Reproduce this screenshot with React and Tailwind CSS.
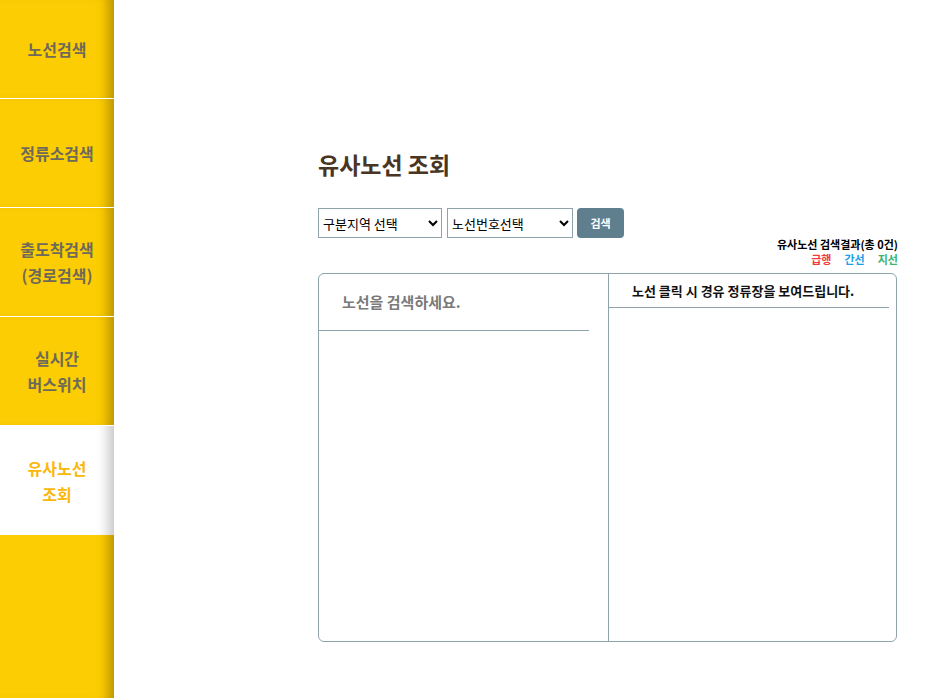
import React from "react";

const menus = [
  { label: ["노선검색"], h: "h-[99px]" },
  { label: ["정류소검색"], h: "h-[109px]" },
  { label: ["출도착검색", "(경로검색)"], h: "h-[109px]" },
  { label: ["실시간", "버스위치"], h: "h-[109px]" },
  { label: ["유사노선", "조회"], h: "h-[109px]", active: true },
];

export default function App() {
  return (
    <div
      className="flex min-h-[698px] w-full bg-white"
      style={{ fontFamily: '"Noto Sans CJK KR", "Noto Sans", sans-serif' }}
    >
      {/* 왼쪽 메뉴 */}
      <div className="flex w-[114px] shrink-0 flex-col bg-[#fdcd03] shadow-[inset_-14px_0_12px_-8px_rgba(0,0,0,0.28)]">
        {menus.map((m, i) => (
          <div
            key={i}
            className={
              "flex flex-col items-center justify-center text-[16px] font-bold leading-[26px] " +
              m.h +
              (m.active
                ? " bg-white text-[#fbb70c] shadow-[inset_-14px_0_12px_-8px_rgba(0,0,0,0.22)]"
                : " border-b border-white bg-[#fdcd03] text-[#6e6a5a] shadow-[inset_-14px_0_12px_-8px_rgba(0,0,0,0.28)]")
            }
          >
            {m.label.map((l) => (
              <span key={l}>{l}</span>
            ))}
          </div>
        ))}
        <div className="flex-1" />
      </div>

      {/* 본문 */}
      <div className="flex-1 pl-[204px] pr-[45px] pt-[148px]">
        <h1 className="text-[23px] font-bold leading-[32px] text-[#4a3422]">유사노선 조회</h1>

        <div className="mt-[28px] flex items-center gap-[5px]">
          <select className="h-[30px] w-[124px] border border-[#8fa3ad] bg-white px-0 text-[13px] text-black">
            <option>구분지역 선택</option>
          </select>
          <select className="h-[30px] w-[126px] border border-[#8fa3ad] bg-white px-0 text-[13px] text-black">
            <option>노선번호선택</option>
          </select>
          <button className="ml-[-1px] h-[30px] w-[47px] rounded-[4px] bg-[#5f7f8e] text-[11px] font-bold text-white">
            검색
          </button>
        </div>

        <div className="mt-[-1px] text-right text-[11px] font-bold leading-[15px]">
          <div className="text-black">유사노선 검색결과(총 0건)</div>
          <div className="flex justify-end gap-[13px]">
            <span className="text-[#f03c3c]">급행</span>
            <span className="text-[#1ea0e6]">간선</span>
            <span className="text-[#3cb371]">지선</span>
          </div>
        </div>

        <div className="mt-[6px] flex h-[369px] w-[579px] rounded-[6px] border border-[#8fa3ad]">
          <div className="w-[290px] border-r border-[#8fa3ad] pr-[19px]">
            <div className="flex h-[57px] items-center border-b border-[#8fa3ad] pl-[23px] text-[15px] font-bold text-[#7a7a7a]">
              노선을 검색하세요.
            </div>
          </div>
          <div className="flex-1 pr-[7px]">
            <div className="flex h-[34px] items-center border-b border-[#8fa3ad] pl-[23px] text-[13px] font-bold text-[#111]">
              노선 클릭 시 경유 정류장을 보여드립니다.
            </div>
          </div>
        </div>
      </div>
    </div>
  );
}
